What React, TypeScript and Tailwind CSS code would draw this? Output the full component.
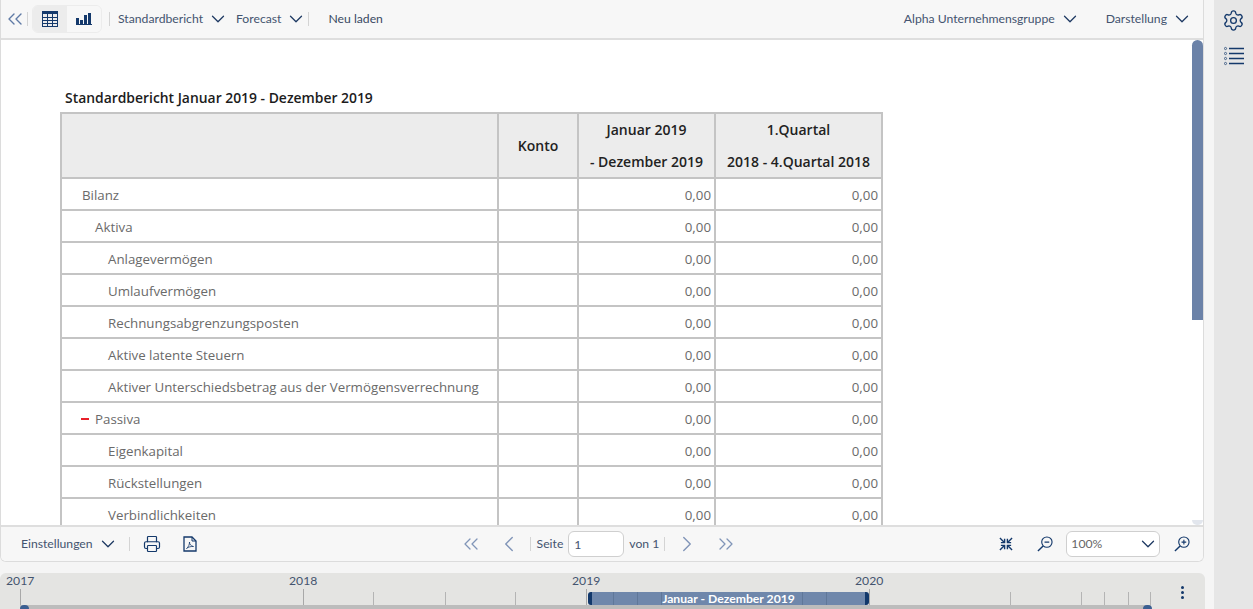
import { ChevronDown, ChevronLeft, ChevronRight, ChevronsLeft, ChevronsRight, Printer, Settings } from 'lucide-react'

const rows = [
  { label: 'Bilanz', indent: 'pl-5' },
  { label: 'Aktiva', indent: 'pl-[33px]' },
  { label: 'Anlagevermögen', indent: 'pl-[46px]' },
  { label: 'Umlaufvermögen', indent: 'pl-[46px]' },
  { label: 'Rechnungsabgrenzungsposten', indent: 'pl-[46px]' },
  { label: 'Aktive latente Steuern', indent: 'pl-[46px]' },
  { label: 'Aktiver Unterschiedsbetrag aus der Vermögensverrechnung', indent: 'pl-[46px]' },
  { label: 'Passiva', indent: 'pl-[33px]', minus: true },
  { label: 'Eigenkapital', indent: 'pl-[46px]' },
  { label: 'Rückstellungen', indent: 'pl-[46px]' },
  { label: 'Verbindlichkeiten', indent: 'pl-[46px]' },
]

const majorTicks = [
  { x: 20, year: '2017' },
  { x: 303, year: '2018' },
  { x: 586, year: '2019' },
  { x: 869, year: '2020' },
]
const minorTicks = [373, 445, 515, 1010, 1081, 1104, 1128, 1150]
const rangeTicks = [21, 45, 69, 210, 234]

function Divider() {
  return <div className="h-[14px] w-px bg-[#d4d4d4]" />
}

function Menu({ label, className }: { label: string; className?: string }) {
  return (
    <button className={`flex items-center gap-[4px] text-[12.2px] text-[#44546f] ${className ?? ''}`}>
      {label}
      <ChevronDown className="h-[22px] w-[22px] text-[#1f3a63]" strokeWidth={1.4} />
    </button>
  )
}

function TableIcon() {
  return (
    <svg width="16" height="16" viewBox="0 0 16 16" fill="none" stroke="#14396b">
      <rect x="0.5" y="0.5" width="15" height="15" strokeWidth="1" />
      <rect x="0" y="0" width="16" height="3" fill="#14396b" stroke="none" />
      <path d="M0 6.500h16M0 9.500h16M0 12.500h16M5.500 3v13M10.500 3v13" strokeWidth="1" />
    </svg>
  )
}

function BarsIcon() {
  return (
    <svg width="16" height="12" viewBox="0 0 16 12" fill="#14396b">
      <rect x="0" y="5" width="3" height="7" />
      <rect x="4" y="7" width="3" height="5" />
      <rect x="8" y="2" width="3" height="10" />
      <rect x="12" y="0" width="3" height="12" />
      <rect x="0" y="11" width="16" height="1" />
    </svg>
  )
}

function ListIcon() {
  return (
    <svg width="20" height="20" viewBox="0 0 20 20" fill="none" stroke="#14396b">
      <path d="M5 2.500h15M5 7.500h15M5 12.500h15M5 17.500h15" strokeWidth="1.3" />
      <circle cx="1.500" cy="2.500" r="1.100" strokeWidth="0.7" />
      <circle cx="1.500" cy="7.500" r="1.100" strokeWidth="0.7" />
      <circle cx="1.500" cy="12.500" r="1.100" strokeWidth="0.7" />
      <circle cx="1.500" cy="17.500" r="1.100" strokeWidth="0.7" />
    </svg>
  )
}

function PdfIcon() {
  return (
    <svg width="14" height="16" viewBox="0 0 14 16" fill="none" stroke="#14396b">
      <path d="M1 1h8l4 4v10H1z" strokeWidth="1.3" />
      <path d="M9 1v4h4" strokeWidth="1" />
      <path d="M3.500 12.500c2-1.500 3-4 3-6.500 0 2.500 1.500 4 4 4.500-2.500-.2-5 .4-7 2z" strokeWidth="0.8" />
    </svg>
  )
}

function ShrinkIcon() {
  return (
    <svg width="14" height="14" viewBox="0 0 15 15" fill="none" stroke="#14396b" strokeWidth="1.500">
      <path d="M1 1l4.500 4.500M2 6h4V2M14 1L9.500 5.500M13 6H9V2M1 14l4.500-4.500M2 9h4v4M14 14L9.500 9.500M13 9H9v4" />
    </svg>
  )
}

function Magnifier({ plus }: { plus?: boolean }) {
  return (
    <svg width="16" height="16" viewBox="0 0 17 17" fill="none" stroke="#14396b" strokeWidth="1.200">
      <circle cx="10.500" cy="6.500" r="5.500" />
      <path d="M6.500 10.500L1 16" strokeWidth="1.500" />
      <path d="M8 6.500h5" />
      {plus && <path d="M10.500 4v5" />}
    </svg>
  )
}

export default function App() {
  return (
    <div className="flex h-[609px] w-[1253px] overflow-hidden bg-[#f5f5f5] font-['Lato',sans-serif]">
      <div className="flex w-[1205px] shrink-0 flex-col">
        {/* Report card */}
        <div className="flex h-[562px] w-[1204px] flex-col overflow-hidden rounded-b-md border-x border-b border-[#dcdcdc] bg-white">
          <div className="flex h-10 shrink-0 items-center border-b-2 border-[#dedede] bg-[#f7f7f7] pr-[10px] pl-[2px]">
            <ChevronsLeft className="h-6 w-6 shrink-0 text-[#5f7aa5]" strokeWidth={1.4} />
            <Divider />
            <div className="ml-1 flex h-7 overflow-hidden rounded-md border border-[#ececec]">
              <div className="flex w-[34px] items-center justify-center bg-[#ececec]"><TableIcon /></div>
              <div className="flex w-[34px] items-center justify-center bg-[#f7f7f7]"><BarsIcon /></div>
            </div>
            <div className="ml-[7px] mr-[8px]"><Divider /></div>
            <Menu label="Standardbericht" />
            <Menu label="Forecast" className="ml-[7px]" />
            <div className="ml-[1px]"><Divider /></div>
            <button className="ml-[19px] text-[12.2px] text-[#3a4a63]">Neu laden</button>
            <Menu label="Alpha Unternehmensgruppe" className="ml-auto" />
            <Menu label="Darstellung" className="ml-[25px]" />
          </div>

          <div className="relative min-h-0 flex-1 overflow-hidden bg-white pt-[48px] pl-[59px] font-['Open_Sans',sans-serif]">
            <div className="absolute top-0 right-0 h-[280px] w-[11px] rounded-t-md bg-[#6b82a8]" />
            <div className="absolute right-0 bottom-0 h-[5px] w-[11px] rounded-b-md bg-[#e2e6ed]" />
            <h1 className="ml-[5px] text-[13.9px] leading-[19px] font-semibold text-[#1c1c1c]">
              Standardbericht Januar 2019 - Dezember 2019
            </h1>
            <table className="mt-[5px] w-[822px] table-fixed border-collapse border-2 border-[#c4c4c4] text-[13.3px]">
              <colgroup>
                <col className="w-[437px]" />
                <col className="w-[80px]" />
                <col className="w-[137px]" />
                <col className="w-[167px]" />
              </colgroup>
              <thead>
                <tr className="h-[63px] bg-[#ececec] text-[14px] text-[#222]">
                  <th className="border-2 border-[#c4c4c4]" />
                  <th className="border-2 border-[#c4c4c4] font-semibold">Konto</th>
                  <th className="border-2 border-[#c4c4c4] leading-[31.5px] font-semibold">
                    Januar 2019<br />- Dezember 2019
                  </th>
                  <th className="border-2 border-[#c4c4c4] leading-[31.5px] font-semibold">
                    1.Quartal<br />2018 - 4.Quartal 2018
                  </th>
                </tr>
              </thead>
              <tbody className="text-[#6a6a6a]">
                {rows.map((row) => (
                  <tr key={row.label} className="h-[32px]">
                    <td className={`relative border-2 border-[#c4c4c4] pt-[3px] whitespace-nowrap ${row.indent}`}>
                      {row.minus && <span className="absolute top-[15px] left-[19px] h-[2px] w-2 bg-[#e8202a]" />}
                      {row.label}
                    </td>
                    <td className="border-2 border-[#c4c4c4]" />
                    <td className="border-2 border-[#c4c4c4] pt-[3px] pr-[3px] text-right">0,00</td>
                    <td className="border-2 border-[#c4c4c4] pt-[3px] pr-[3px] text-right">0,00</td>
                  </tr>
                ))}
              </tbody>
            </table>
          </div>

          <div className="flex h-[36px] shrink-0 items-center border-t-2 border-[#dedede] bg-[#f7f7f7] pl-5 text-[12.2px] whitespace-nowrap text-[#44546f]">
            <Menu label="Einstellungen" />
            <div className="ml-[10px]"><Divider /></div>
            <Printer className="ml-[13px] h-[18px] w-[18px] shrink-0 text-[#14396b]" strokeWidth={1.6} />
            <div className="ml-[22px]"><PdfIcon /></div>
            <ChevronsLeft className="ml-[262px] h-6 w-6 shrink-0 text-[#8195b8]" strokeWidth={1.3} />
            <ChevronLeft className="ml-[13px] h-[26px] w-[26px] shrink-0 text-[#8195b8]" strokeWidth={1.3} />
            <div className="ml-2"><Divider /></div>
            <span className="ml-[6px]">Seite</span>
            <input
              readOnly
              value="1"
              className="ml-[5px] h-[26px] w-[56px] rounded-md border border-[#cfcfcf] bg-white px-[5px] text-[12.2px] text-[#44546f]"
            />
            <span className="ml-[5px]">von 1</span>
            <div className="ml-[5px]"><Divider /></div>
            <ChevronRight className="ml-[9px] h-[26px] w-[26px] shrink-0 text-[#8195b8]" strokeWidth={1.3} />
            <ChevronsRight className="ml-[14px] h-6 w-6 shrink-0 text-[#8195b8]" strokeWidth={1.3} />
            <div className="ml-[261px]"><ShrinkIcon /></div>
            <div className="ml-6"><Magnifier /></div>
            <div className="ml-[13px] flex h-[26px] w-[94px] shrink-0 items-center justify-between rounded-md border border-[#cfcfcf] bg-white pl-[4px] text-[#666]">
              100%
              <ChevronDown className="h-[22px] w-[22px] text-[#1f3a63]" strokeWidth={1.4} />
            </div>
            <div className="ml-[14px]"><Magnifier plus /></div>
          </div>
        </div>

        {/* Timeline */}
        <div className="relative mt-[11px] h-[36px] rounded-t-md bg-[#e4e4e2] text-[12.2px] text-[#44546f]">
          {majorTicks.map((tick) => (
            <div key={tick.year}>
              <span className="absolute top-0 leading-[16px]" style={{ left: tick.x - 14 }}>{tick.year}</span>
              <div className="absolute top-[16px] h-4 w-px bg-[#a8a8a8]" style={{ left: tick.x }} />
            </div>
          ))}
          {minorTicks.map((x) => (
            <div key={x} className="absolute top-[19px] h-[13px] w-px bg-[#b4b4b4]" style={{ left: x }} />
          ))}
          <div className="absolute top-[19px] left-[588px] flex h-[13px] w-[281px] items-center justify-center rounded-[3px] border-x-[4px] border-[#12386b] bg-[#6f87ab] text-[12.2px] leading-[13px] font-bold text-white">
            {rangeTicks.map((x) => (
              <div key={x} className="absolute top-0 h-[13px] w-px bg-[#5f7799]" style={{ left: x }} />
            ))}
            <span className="relative">Januar - Dezember 2019</span>
          </div>
          <div className="absolute bottom-0 left-[20px] h-[4px] w-[1131px] bg-[#bcbcbc]" />
          <div className="absolute bottom-0 left-[20px] h-[4px] w-[9px] rounded-t-sm bg-[#3b5f92]" />
          <div className="absolute bottom-0 left-[1143px] h-[4px] w-[9px] rounded-t-sm bg-[#3b5f92]" />
          <div className="absolute top-[13px] left-[1181px] flex flex-col gap-[2px]">
            <span className="h-[3px] w-[3px] rounded-full bg-[#14396b]" />
            <span className="h-[3px] w-[3px] rounded-full bg-[#14396b]" />
            <span className="h-[3px] w-[3px] rounded-full bg-[#14396b]" />
          </div>
        </div>
      </div>

      {/* Right rail */}
      <div className="ml-[9px] flex w-[39px] flex-col items-center gap-[14px] bg-[#e6e6e6] pt-[9px]">
        <Settings className="h-[23px] w-[23px] text-[#14396b]" strokeWidth={1.4} />
        <ListIcon />
      </div>
    </div>
  )
}
